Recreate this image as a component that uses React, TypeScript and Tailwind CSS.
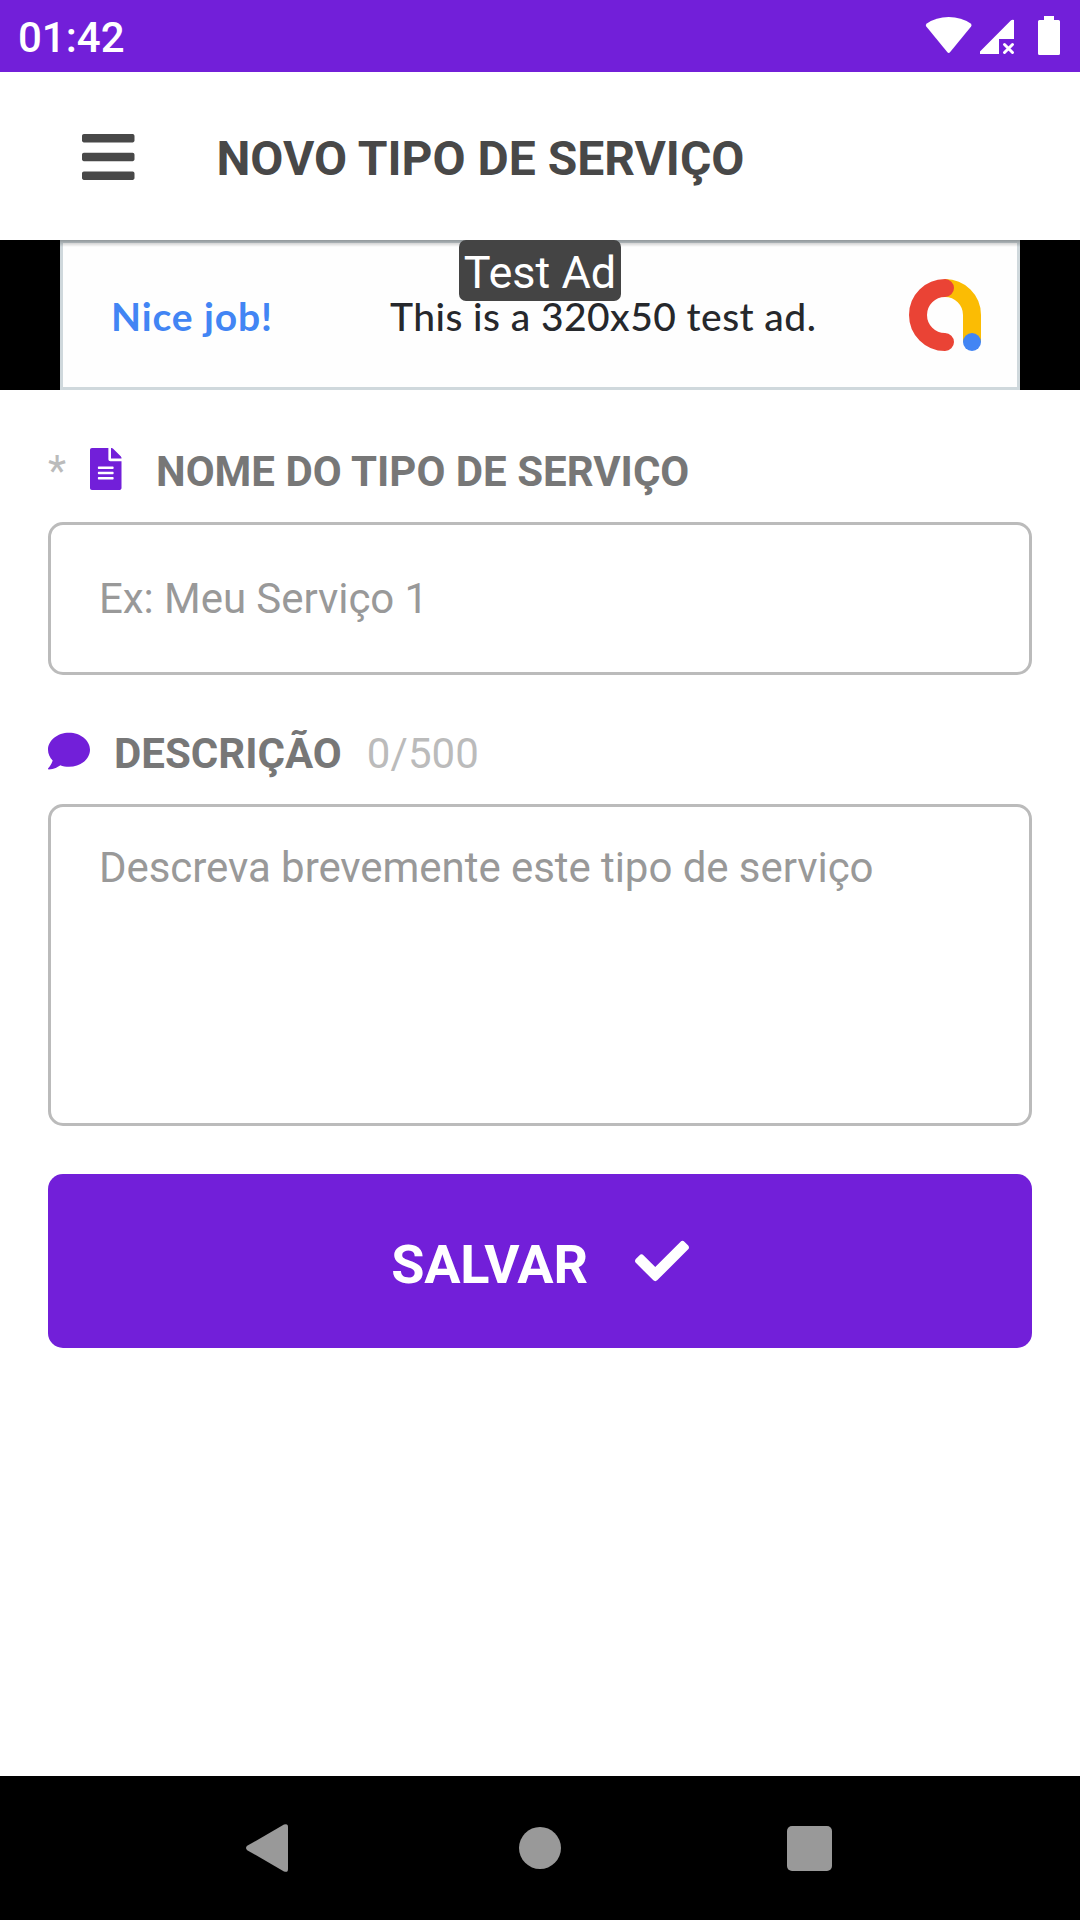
import { FaBars, FaCheck, FaComment, FaFileAlt } from "react-icons/fa";

function StatusBar() {
  return (
    <div className="flex h-[72px] shrink-0 items-center bg-[#721fd9] pl-[18px] pr-[20px] text-white">
      <span className="mt-[4px] text-[42px] leading-[48px] font-medium">01:42</span>
      <div className="ml-auto flex h-full">
        <svg className="h-[72px] w-[136px]" viewBox="924 0 136 72" fill="currentColor">
          <path d="M926.3 26.6Q925 25 926.8 23.6Q936 17 948.7 17Q961.500 17 970.600 23.600Q972.400 25 971.100 26.600L950.200 52Q948.700 53.800 947.200 52Z" />
          <path d="M980 54V51.600L1010.800 20.500Q1012 19.500 1014 20V39H999V54Z" />
          <path d="M1004.500 44.500L1012.500 52.500M1012.500 44.500L1004.500 52.500" stroke="currentColor" strokeWidth="3" strokeLinecap="round" />
          <path d="M1044 16H1054V20H1058.500Q1060 20 1060 21.500V53.500Q1060 55 1058.500 55H1039.500Q1038 55 1038 53.500V21.500Q1038 20 1039.500 20H1044Z" />
        </svg>
      </div>
    </div>
  );
}

function AdBanner() {
  return (
    <div className="relative h-[150px] shrink-0 bg-black px-[60px]">
      <div className="flex h-full items-center border-[3px] border-[#cfd8dc] bg-[#fefefe] pr-[36px] pl-[48px] font-['Lato',sans-serif]">
        <span className="mt-[2px] w-[279px] text-[39px] leading-[30px] font-bold tracking-[0.9px] whitespace-nowrap text-[#4285f4]">
          Nice job!
        </span>
        <span className="mt-[2px] text-[39px] leading-[30px] font-medium tracking-[0.440px] whitespace-nowrap text-[#26282c]">
          This is a 320x50 test ad.
        </span>
        <svg className="ml-auto size-[72px]" viewBox="0 0 72 72" fill="none" strokeWidth="18">
          <path d="M36 9A27 27 0 0 1 63 36V63" stroke="#fbbc04" />
          <path d="M36 9A27 27 0 0 0 36 63" stroke="#ea4335" strokeLinecap="round" />
          <circle cx="63" cy="63" r="9" fill="#4285f4" />
        </svg>
      </div>
      <div className="absolute inset-x-0 top-0 h-[7px] bg-gradient-to-b from-black/30 to-transparent" />
      <div className="absolute top-0 left-[459px] flex h-[61px] w-[162px] items-center justify-center rounded-[7px] bg-[#444] text-[45px] leading-[54px] whitespace-nowrap text-white">
        <span className="mt-[4px]">Test Ad</span>
      </div>
    </div>
  );
}

function NavBar() {
  return (
    <div className="flex h-[144px] shrink-0 items-center bg-black text-[#999]">
      <svg className="ml-[246px] h-[48px] w-[42px]" viewBox="0 0 42 48" fill="currentColor">
        <path d="M1.200 21.800L38 .6Q42 -1 42 3V45Q42 49 38 47.400L1.200 26.200Q-1.200 24 1.200 21.800Z" />
      </svg>
      <div className="ml-[231px] size-[42px] rounded-full bg-[#999]" />
      <div className="ml-[226px] size-[45px] rounded-[5px] bg-[#999]" />
    </div>
  );
}

export default function App() {
  return (
    <div className="flex h-[1920px] w-[1080px] flex-col overflow-hidden bg-white font-['Roboto',sans-serif]">
      <StatusBar />
      <header className="flex h-[168px] shrink-0 items-center pl-[82px] text-[#484848]">
        <FaBars className="mt-px h-[60px] w-[52.500px]" />
        <h1 className="mt-[6px] ml-[82px] text-[48px] leading-[56px] font-bold">NOVO TIPO DE SERVIÇO</h1>
      </header>
      <AdBanner />
      <main className="flex flex-1 flex-col px-[48px]">
        <div className="mt-[54px] flex h-[50px] items-center text-[42px] leading-[50px]">
          <span className="mt-[3px] w-[42px] text-[#bbb]">*</span>
          <FaFileAlt className="h-[42px] w-[31.500px] text-[#721fd9]" />
          <label className="mt-[5px] ml-[34.500px] font-bold text-[#777]">NOME DO TIPO DE SERVIÇO</label>
        </div>
        <input
          className="mt-[28px] h-[153px] w-full shrink-0 rounded-[15px] border-[3px] border-[#bbb] px-[48px] text-[42px] tracking-[-0.060px] placeholder:text-[#999]"
          placeholder="Ex: Meu Serviço 1"
        />
        <div className="mt-[51px] flex h-[50px] items-center text-[42px] leading-[50px]">
          <FaComment className="size-[42px] text-[#721fd9]" />
          <label className="mt-[5px] ml-[24px] font-bold text-[#777]">DESCRIÇÃO</label>
          <span className="mt-[5px] ml-[25px] tracking-[0.100px] text-[#bbb]">0/500</span>
        </div>
        <textarea
          className="mt-[28px] h-[322px] w-full shrink-0 resize-none rounded-[15px] border-[3px] border-[#bbb] px-[48px] pt-[36px] text-[42px] leading-[50px] tracking-[-0.060px] placeholder:text-[#999]"
          placeholder="Descreva brevemente este tipo de serviço"
        />
        <button className="mt-[48px] flex h-[174px] shrink-0 items-center justify-center rounded-[15px] bg-[#721fd9] text-white">
          <span className="mt-[8px] text-[54px] leading-[64px] font-bold tracking-[-0.200px]">SALVAR</span>
          <FaCheck className="ml-[47px] size-[54px]" />
        </button>
      </main>
      <NavBar />
    </div>
  );
}
